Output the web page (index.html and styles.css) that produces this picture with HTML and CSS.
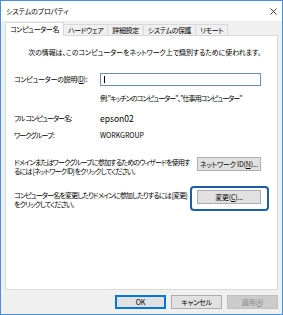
FILE: index.html
```html
<!DOCTYPE html>
<html lang="ja">
<head>
    <meta charset="UTF-8">
    <title>システムのプロパティ</title>
    <link rel="stylesheet" href="styles.css">
</head>
<body>
    <div class="window">
        <div class="titlebar">
            <span class="title">システムのプロパティ</span>
            <svg class="close" width="7" height="7" viewBox="0 0 7 7">
                <path d="M0.5 0.5L6.5 6.5M6.5 0.5L0.5 6.5" stroke="#2b2b2b" stroke-width="0.9" fill="none"/>
            </svg>
        </div>

        <div class="content">
            <div class="tabs">
                <div class="tab active">コンピューター名</div>
                <div class="tab">ハードウェア</div>
                <div class="tab">詳細設定</div>
                <div class="tab">システムの保護</div>
                <div class="tab">リモート</div>
            </div>

            <div class="panel">
                <div class="intro">
                    <svg class="pc-icon" width="20" height="17" viewBox="0 0 20 17">
                        <defs>
                            <linearGradient id="screen" x1="0" y1="0" x2="1" y2="1">
                                <stop offset="0" stop-color="#8cc8f2"/>
                                <stop offset="1" stop-color="#2a86d4"/>
                            </linearGradient>
                        </defs>
                        <polygon points="5,0.5 19.5,2 19.5,11 5,9.5" fill="url(#screen)" stroke="#3b77b3" stroke-width="0.7"/>
                        <polygon points="11,10.3 13,10.5 13,12 11,11.8" fill="#9a9a9a"/>
                        <polygon points="1,13.5 12,12.5 15.5,15.5 3,16.7" fill="#d4d4d4" stroke="#9c9c9c" stroke-width="0.6"/>
                        <path d="M3 14.2L12.2 13.4M4 15.2L13.5 14.4" stroke="#a8a8a8" stroke-width="0.5"/>
                    </svg>
                    <p class="intro-text">次の情報は、このコンピューターをネットワーク上で識別するために使われます。</p>
                </div>

                <div class="field desc">
                    <label for="desc">コンピューターの説明(<u>D</u>):</label>
                    <div class="input"><span class="caret"></span></div>
                </div>
                <div class="hint">例:&nbsp;"キッチンのコンピューター"、"仕事用コンピューター"</div>

                <div class="field info">
                    <span class="key">フル コンピューター名:</span>
                    <span class="pc-name">epson02</span>
                </div>
                <div class="field info">
                    <span class="key">ワークグループ:</span>
                    <span class="workgroup">WORKGROUP</span>
                </div>

                <div class="action first">
                    <p>ドメインまたはワークグループに参加するためのウィザードを使用す<br>るには [ネットワーク ID] をクリックしてください。</p>
                    <button class="btn wide">ネットワーク ID(<u>N</u>)...</button>
                </div>
                <div class="action">
                    <p>コンピューター名を変更したりドメインに参加したりするには [変更]<br>をクリックしてください。</p>
                    <span class="marked"><button class="btn wide">変更(<u>C</u>)...</button></span>
                </div>
            </div>

            <div class="footer">
                <button class="btn default">OK</button>
                <button class="btn">キャンセル</button>
                <button class="btn" disabled>適用(<u>A</u>)</button>
            </div>
        </div>
    </div>
</body>
</html>
```

FILE: styles.css
```css
body {
    margin: 0;
    font-family: "Noto Sans CJK JP", "Noto Sans", sans-serif;
    font-size: 7px;
    line-height: 9px;
    color: #000;
    font-feature-settings: "palt";
}
p {
    margin: 0;
}
u {
    text-decoration-thickness: 0.5px;
    text-underline-offset: 1px;
}
.window {
    width: 283px;
    height: 315px;
    box-sizing: border-box;
    border: 1px solid #4a90d9;
    background-color: #f0f0f0;
    display: flex;
    flex-direction: column;
}
.titlebar {
    height: 20px;
    background-color: #fff;
    display: flex;
    align-items: center;
    justify-content: space-between;
    padding: 0 5px 0 5px;
}
.title {
    padding-top: 1px;
    letter-spacing: -0.1px;
}
.content {
    flex: 1;
    display: flex;
    flex-direction: column;
    padding: 1px 4px 0 4px;
}
.tabs {
    height: 13px;
    display: flex;
    align-items: flex-end;
}
.tab {
    height: 10px;
    line-height: 10px;
    padding: 0 4px;
    border: 1px solid #d9d9d9;
    border-bottom: none;
    margin-left: -1px;
    white-space: nowrap;
    letter-spacing: -0.4px;
}
.tab:first-child {
    margin-left: 0;
}
.tab.active {
    height: 13px;
    line-height: 12px;
    background-color: #fff;
    margin-bottom: -1px;
    position: relative;
    z-index: 1;
}
.panel {
    height: 255px;
    box-sizing: border-box;
    border: 1px solid #d9d9d9;
    background-color: #fff;
    padding: 10px 16px 0 8px;
}
.intro {
    display: flex;
    gap: 14px;
    height: 17px;
}
.intro-text {
    padding-top: 2px;
    white-space: nowrap;
    letter-spacing: -0.1px;
}
.field {
    display: grid;
    grid-template-columns: 86px 1fr;
    align-items: center;
    white-space: nowrap;
}
.field.desc {
    margin-top: 10px;
}
.field.desc label {
    letter-spacing: -0.3px;
}
.input {
    height: 13px;
    box-sizing: border-box;
    border: 1px solid #6f8fb8;
    background-color: #fff;
    padding: 2px 3px;
}
.caret {
    display: block;
    width: 1px;
    height: 7px;
    background-color: #000;
}
.hint {
    margin-top: 8px;
    padding-left: 86px;
    white-space: nowrap;
    letter-spacing: -0.95px;
}
.field.info {
    line-height: 17px;
}
.hint + .field.info {
    margin-top: 7px;
}
.field.info .key {
    letter-spacing: -0.9px;
}
.pc-name {
    font-size: 8.5px;
}
.action {
    display: flex;
    justify-content: space-between;
    align-items: flex-start;
    margin-top: 14px;
    white-space: nowrap;
}
.action p {
    padding-top: 1px;
    letter-spacing: -0.85px;
}
.action.first {
    margin-top: 13px;
}
.action.first p {
    letter-spacing: -0.8px;
}
.btn {
    width: 51px;
    height: 14px;
    padding: 0;
    font-family: inherit;
    font-size: 7px;
    line-height: 12px;
    color: #000;
    background-color: #e1e1e1;
    border: 1px solid #adadad;
    font-feature-settings: "palt";
    letter-spacing: -0.2px;
}
.btn.wide {
    width: 64px;
}
.btn.default {
    border-color: #0078d7;
    box-shadow: inset 0 0 0 1px #0078d7;
}
.btn:disabled {
    color: #8a8a8a;
    background-color: #cccccc;
    border-color: #bfbfbf;
}
.marked {
    position: relative;
    display: block;
}
.marked::after {
    content: "";
    position: absolute;
    left: -7px;
    right: -8px;
    top: -4px;
    bottom: -7px;
    border: 2px solid #1c5ea8;
    border-radius: 4px;
}
.footer {
    display: flex;
    justify-content: flex-end;
    gap: 5px;
    padding-top: 5px;
}
```
